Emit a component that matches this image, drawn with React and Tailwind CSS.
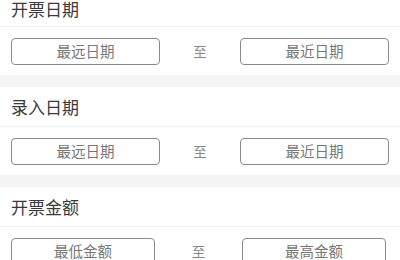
const SECTIONS = [
  { title: "开票日期", from: "最远日期", to: "最近日期", box: "w-[149px]", gap: "w-[80px]" },
  { title: "录入日期", from: "最远日期", to: "最近日期", box: "w-[149px]", gap: "w-[80px]" },
  { title: "开票金额", from: "最低金额", to: "最高金额", box: "w-[144px]", gap: "w-[87px]" },
];

function RangeSection({ section, first }) {
  return (
    <div>
      {!first && <div className="h-[12px] bg-[#f4f4f4]" />}
      {first ? (
        // top of the first section is scrolled off; only the lower part of its title row shows
        <div className="h-[27px] flex items-start px-[11px] border-b border-[#efefef]">
          <span className="text-[17px] leading-[17px] text-[#3a3a3a]">{section.title}</span>
        </div>
      ) : (
        <div className="h-[40px] flex items-center px-[11px] border-b border-[#efefef]">
          <span className="text-[17px] text-[#3a3a3a]">{section.title}</span>
        </div>
      )}
      <div className="h-[48px] flex items-center px-[11px]">
        <div
          className={`${section.box} h-[27px] border border-[#8a8a8a] rounded-[4px] flex items-center justify-center text-[14.5px] text-[#777]`}
        >
          {section.from}
        </div>
        <div className={`${section.gap} flex justify-center text-[13.5px] text-[#888]`}>至</div>
        <div
          className={`${section.box} h-[27px] border border-[#8a8a8a] rounded-[4px] flex items-center justify-center text-[14.5px] text-[#777]`}
        >
          {section.to}
        </div>
      </div>
    </div>
  );
}

export default function App() {
  return (
    <div
      className="w-[400px] h-[260px] overflow-hidden bg-white"
      style={{ fontFamily: '"Noto Sans CJK SC", "Noto Sans", sans-serif' }}
    >
      {SECTIONS.map((s, i) => (
        <RangeSection key={s.title} section={s} first={i === 0} />
      ))}
    </div>
  );
}
